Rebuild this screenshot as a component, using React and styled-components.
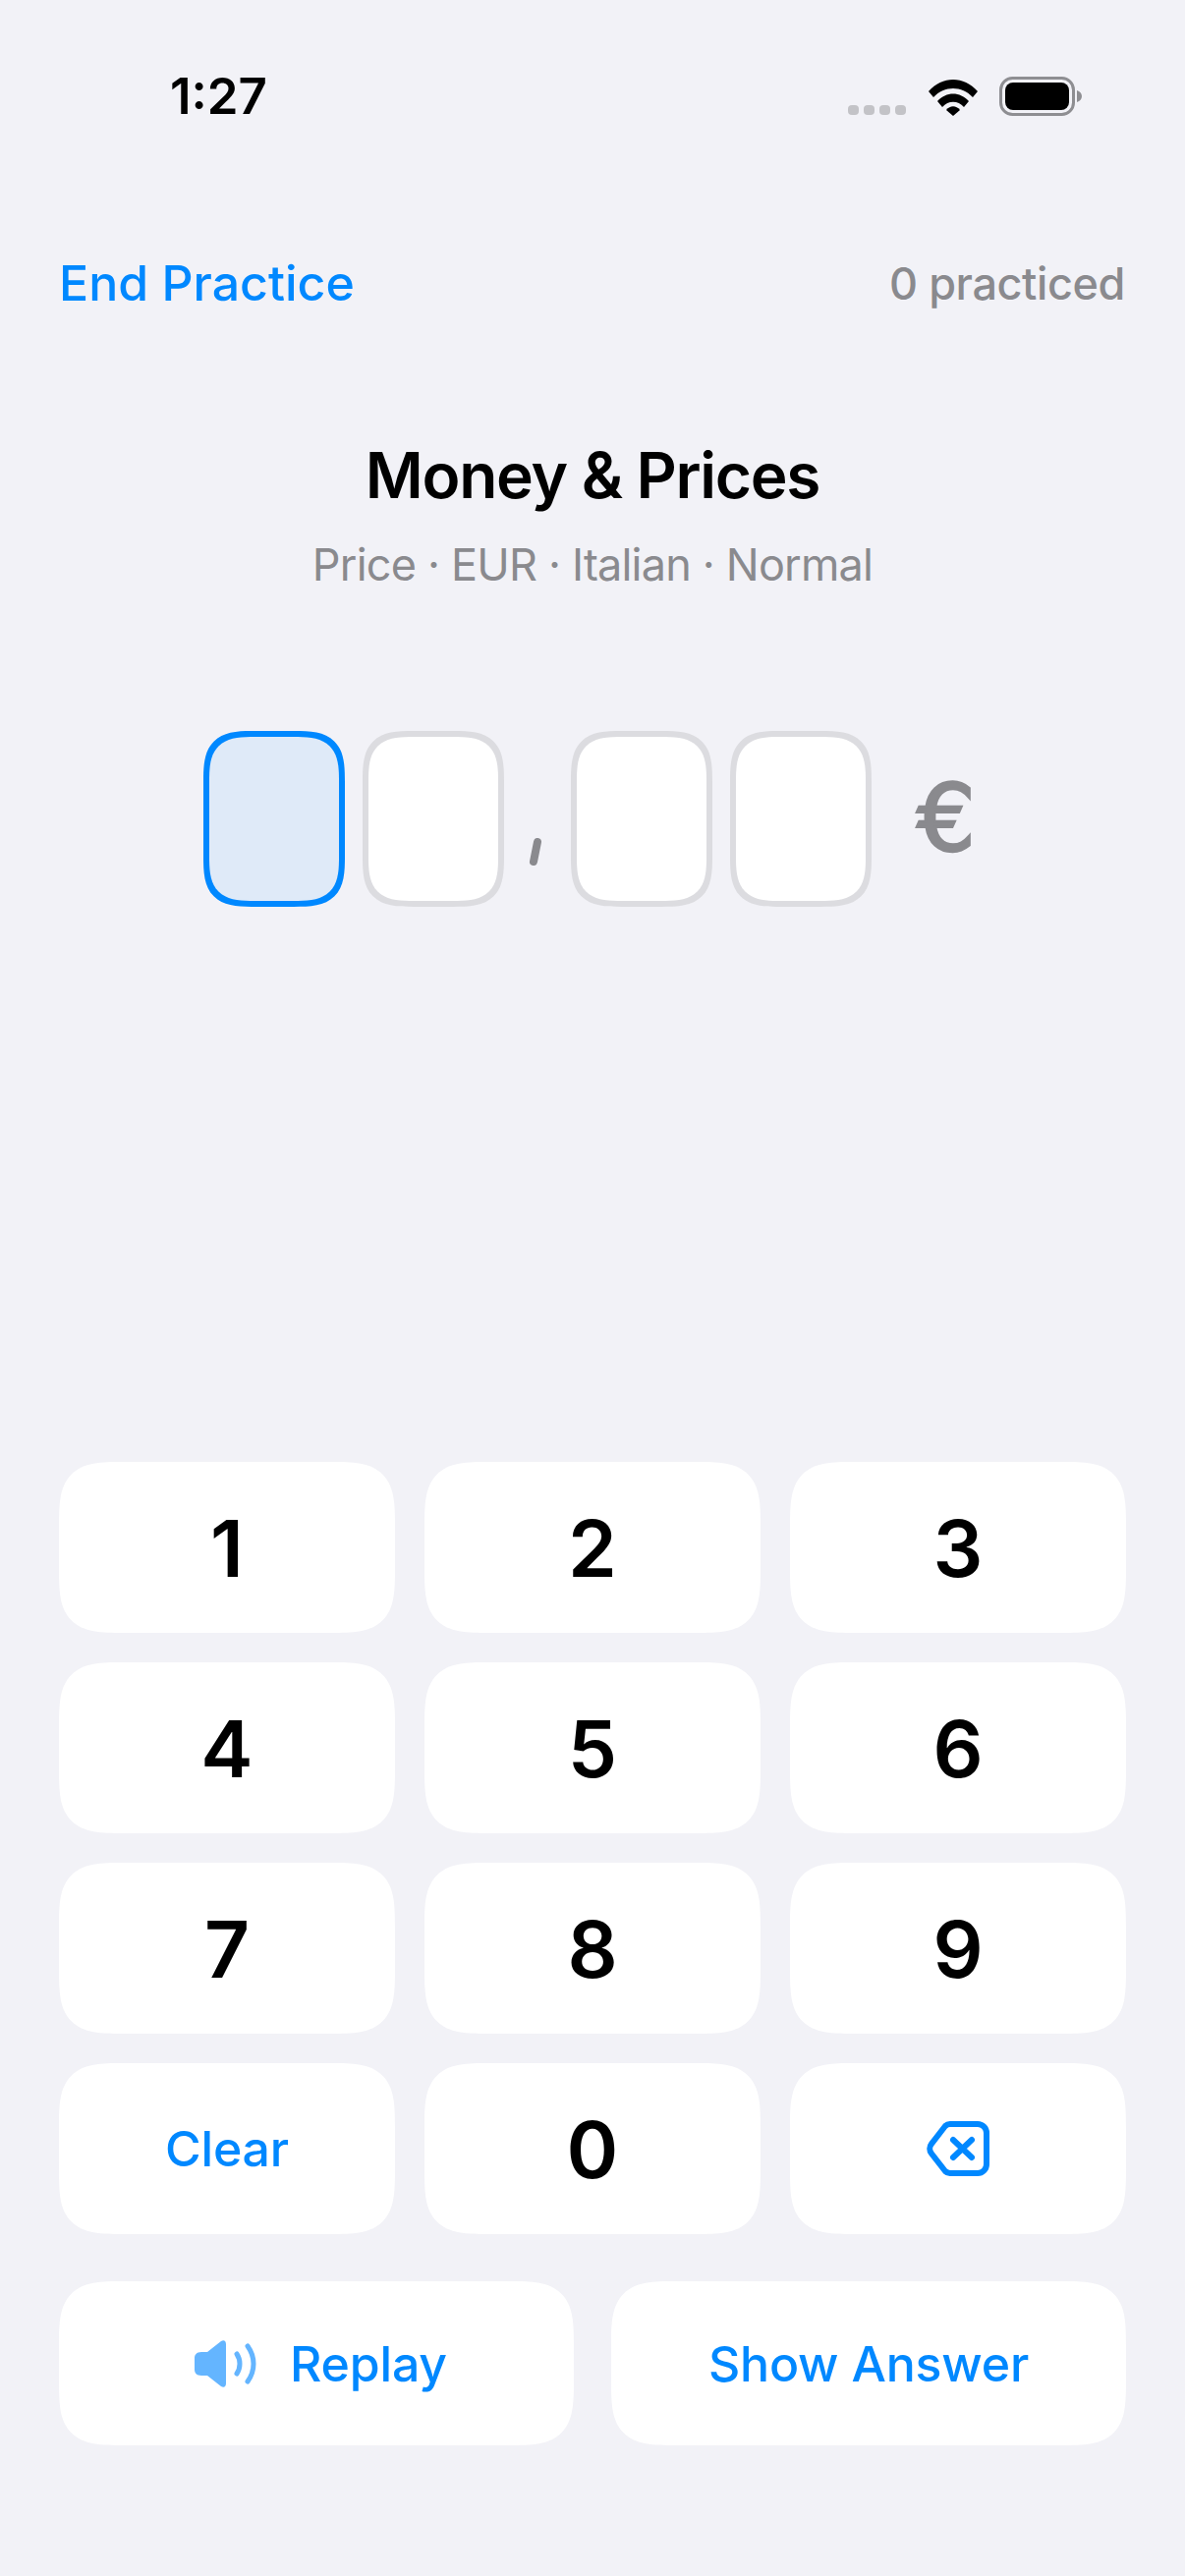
import React from 'react'
import styled, { createGlobalStyle } from 'styled-components'

const blue = '#0088ff'
const grey = '#8a8a8e'

const GlobalStyle = createGlobalStyle`
    html, body {
        margin: 0;
        padding: 0;
        background: #f2f2f7;
    }
    * {
        box-sizing: border-box;
    }
`

const Screen = styled.div`
    width: 1206px;
    height: 2622px;
    display: flex;
    flex-direction: column;
    background: #f2f2f7;
    font-family: Inter, "Liberation Sans", sans-serif;
    overflow: hidden;
`

const StatusBar = styled.div`
    height: 120px;
    padding: 71px 105px 0 173px;
    display: flex;
    align-items: flex-start;
    justify-content: space-between;
`

const Time = styled.div`
    font-size: 51px;
    line-height: 54px;
    font-weight: 600;
    color: #000;
`

const StatusIcons = styled.div`
    display: flex;
    align-items: flex-end;
    height: 40px;
    margin-top: 7px;
`

const Signal = styled.div`
    display: flex;
    gap: 5px;
    margin-right: 22px;
    margin-bottom: 1px;
`

const SignalDot = styled.span`
    width: 11px;
    height: 10px;
    border-radius: 4px;
    background: #c3c3c7;
`

const WifiIcon = styled.svg`
    width: 52px;
    height: 38px;
    margin-right: 21px;
`

const BatteryIcon = styled.svg`
    width: 84px;
    height: 40px;
`

const Header = styled.div`
    margin-top: 138px;
    padding: 0 61px 0 60px;
    height: 60px;
    display: flex;
    align-items: center;
    justify-content: space-between;
`

const EndLink = styled.div`
    color: ${blue};
    font-size: 50px;
    font-weight: 500;
`

const Count = styled.div`
    color: ${grey};
    font-size: 45px;
    font-weight: 500;
    letter-spacing: -0.4px;
`

const Title = styled.h1`
    margin: 130px 0 0;
    text-align: center;
    color: #000;
    font-size: 64px;
    line-height: 72px;
    font-weight: 600;
    letter-spacing: -1.3px;
`

const Subtitle = styled.p`
    margin: 28px 0 0;
    text-align: center;
    color: ${grey};
    font-size: 45px;
    line-height: 54px;
    font-weight: 400;
    letter-spacing: -0.8px;
`

const CellRow = styled.div`
    margin-top: 142px;
    padding-left: 207px;
    display: flex;
    align-items: center;
`

const Cell = styled.div`
    width: 144px;
    height: 179px;
    margin-right: ${(p) => p.$gap}px;
    border-radius: 52px;
    corner-shape: superellipse(1.6);
    border: 6px solid ${(p) => (p.$active ? blue : '#dcdce0')};
    background: ${(p) => (p.$active ? '#dfeaf8' : '#fff')};
`

const Comma = styled.svg`
    width: 14px;
    height: 28px;
    align-self: flex-end;
    margin: 0 30px 42px 24px;
`

const Euro = styled.div`
    margin: 0 0 0 46px;
    color: ${grey};
    font-family: "DejaVu Sans", sans-serif;
    font-size: 94px;
    line-height: 100px;
    font-weight: 400;
    -webkit-text-stroke: 2.5px ${grey};
`

const Keypad = styled.div`
    margin-top: auto;
    padding: 0 60px 133px;
`

const KeyGrid = styled.div`
    display: grid;
    grid-template-columns: repeat(3, 342px);
    grid-auto-rows: 174px;
    gap: 30px;
`

const Key = styled.button`
    border: 0;
    padding: 0 0 0 ${(p) => p.$shift || 0}px;
    border-radius: 66px;
    corner-shape: superellipse(1.7);
    background: #fff;
    display: flex;
    align-items: center;
    justify-content: center;
    gap: ${(p) => p.$gap || 0}px;
    font-family: inherit;
    color: ${(p) => (p.$digit ? '#000' : blue)};
    font-size: ${(p) => (p.$digit ? 80 : 50)}px;
    font-weight: ${(p) => (p.$digit ? 600 : 500)};
    letter-spacing: ${(p) => (p.$digit ? 0 : -0.2)}px;
`

const ActionRow = styled.div`
    margin-top: 48px;
    display: grid;
    grid-template-columns: repeat(2, 524px);
    grid-auto-rows: 167px;
    gap: 38px;
`

const BackspaceIcon = styled.svg`
    width: 64px;
    height: 56px;
`

const SpeakerIcon = styled.svg`
    width: 64px;
    height: 50px;
`

const digits = ['1', '2', '3', '4', '5', '6', '7', '8', '9']

const App = () => {
    return (
        <Screen>
            <GlobalStyle />
            <StatusBar>
                <Time>1:27</Time>
                <StatusIcons>
                    <Signal>
                        <SignalDot />
                        <SignalDot />
                        <SignalDot />
                        <SignalDot />
                    </Signal>
                    <WifiIcon viewBox="0 0 52 38">
                        <path d="M1 13 C 15 -3, 37 -3, 51 13 L 46 19 C 35 7, 17 7, 6 19 Z" fill="#000" />
                        <path d="M10 23 C 19 13, 33 13, 42 23 L 37 29 C 31 22, 21 22, 15 29 Z" fill="#000" />
                        <path d="M19 32 C 23 27, 29 27, 33 32 L 26 38 Z" fill="#000" />
                    </WifiIcon>
                    <BatteryIcon viewBox="0 0 84 40">
                        <rect x="1.5" y="1.5" width="74" height="37" rx="12" fill="none" stroke="#8e8e92" strokeWidth="3" />
                        <rect x="6" y="6" width="65" height="28" rx="8" fill="#000" />
                        <path d="M79 14 C 82 15, 84 17, 84 20 C 84 23, 82 25, 79 26 Z" fill="#8e8e92" />
                    </BatteryIcon>
                </StatusIcons>
            </StatusBar>

            <Header>
                <EndLink>End Practice</EndLink>
                <Count>0 practiced</Count>
            </Header>

            <Title>Money &amp; Prices</Title>
            <Subtitle>Price · EUR · Italian · Normal</Subtitle>

            <CellRow>
                <Cell $active $gap={18} />
                <Cell $gap={0} />
                <Comma viewBox="0 0 14 28">
                    <path d="M10 4 L 6 24" stroke={grey} strokeWidth="8" strokeLinecap="round" />
                </Comma>
                <Cell $gap={18} />
                <Cell $gap={0} />
                <Euro>€</Euro>
            </CellRow>

            <Keypad>
                <KeyGrid>
                    {digits.map((d) => (
                        <Key key={d} $digit>{d}</Key>
                    ))}
                    <Key>Clear</Key>
                    <Key $digit>0</Key>
                    <Key aria-label="Delete">
                        <BackspaceIcon viewBox="0 0 64 56" fill="none" stroke={blue} strokeWidth="6" strokeLinejoin="round" strokeLinecap="round">
                            <path d="M24 3 H 52 A 9 9 0 0 1 61 12 V 44 A 9 9 0 0 1 52 53 H 24 A 7 7 0 0 1 19 51 L 5 33 A 8 8 0 0 1 5 23 L 19 5 A 7 7 0 0 1 24 3 Z" />
                            <path d="M27 19 L 46 37 M 46 19 L 27 37" />
                        </BackspaceIcon>
                    </Key>
                </KeyGrid>
                <ActionRow>
                    <Key $gap={34} $shift={8}>
                        <SpeakerIcon viewBox="0 0 64 50">
                            <path d="M8 13 H 14 L 28 2 C 31 0, 33 2, 33 5 V 45 C 33 48, 31 50, 28 48 L 14 37 H 8 C 3 37, 1 34, 1 31 V 19 C 1 16, 3 13, 8 13 Z" fill="#64b5ff" />
                            <path d="M44 15 C 48 21, 48 29, 44 35 M 55 7 C 63 18, 63 32, 55 43" fill="none" stroke="#64b5ff" strokeWidth="5" strokeLinecap="round" />
                        </SpeakerIcon>
                        Replay
                    </Key>
                    <Key>Show Answer</Key>
                </ActionRow>
            </Keypad>
        </Screen>
    )
}

export default App
